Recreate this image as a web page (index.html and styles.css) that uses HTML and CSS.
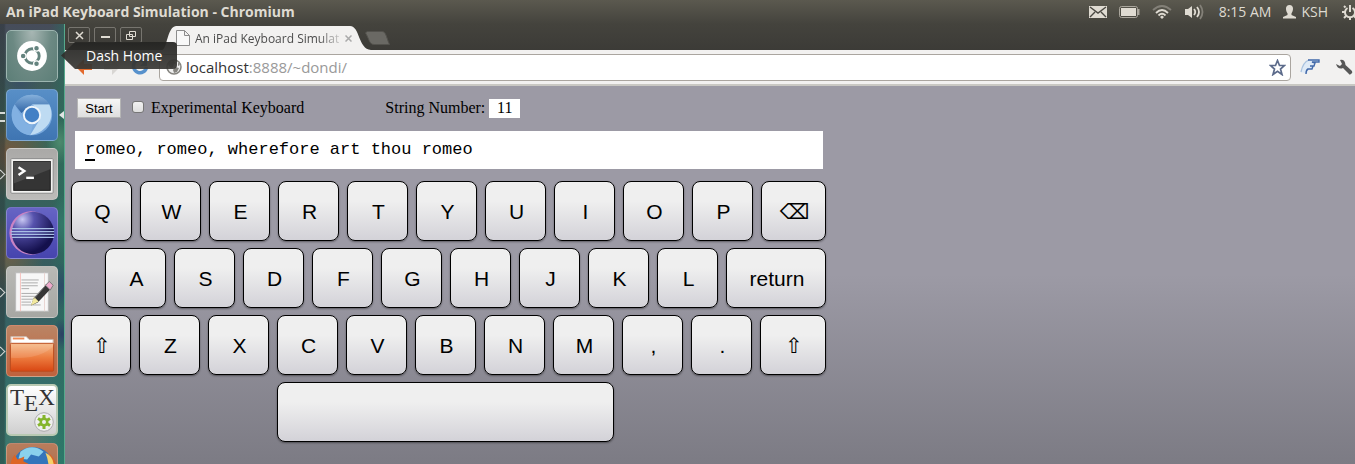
FILE: index.html
```html
<!DOCTYPE html>
<html lang="en">
<head>
<meta charset="utf-8">
<meta name="viewport" content="width=device-width, initial-scale=1">
<title>An iPad Keyboard Simulation</title>
<link rel="stylesheet" href="styles.css">
</head>
<body>
<header class="panel">
  <div class="panel-title">An iPad Keyboard Simulation - Chromium</div>
  <div class="indicators">
    <svg width="18" height="12" viewBox="0 0 18 12"><rect width="18" height="12" fill="#dfdbd2"/><path d="M1 1l8 6 8-6M1 11l5-5M17 11l-5-5" fill="none" stroke="#4a4842" stroke-width="1.4"/></svg>
    <svg width="21" height="12" viewBox="0 0 21 12"><rect x=".5" y=".5" width="18" height="11" rx="2" fill="none" stroke="#aaa69d"/><rect x="2" y="2" width="15" height="8" fill="#dfdbd2"/><path d="M19.5 3v6" stroke="#aaa69d" stroke-width="2"/></svg>
    <svg width="20" height="14" viewBox="0 0 20 14" fill="none"><path d="M1 5Q10-3 19 5" stroke="#838078" stroke-width="1.8"/><path d="M4 8Q10 2 16 8M6.500 10.500Q10 7 13.500 10.500" stroke="#dfdbd2" stroke-width="1.8"/><path d="M8 12l2-1.500 2 1.500-2 2z" fill="#dfdbd2"/></svg>
    <svg width="20" height="16" viewBox="0 0 20 16" fill="none"><path d="M1 5h3l4-3v12l-4-3H1z" fill="#dfdbd2"/><path d="M10 5q2.500 3 0 6M13 3q4 5 0 10" stroke="#dfdbd2" stroke-width="1.8"/><path d="M16 1q5 7 0 14" stroke="#838078" stroke-width="1.800"/></svg>
    <span class="clock">8:15 AM</span>
    <span class="user"><svg width="13" height="14" viewBox="0 0 13 14"><path d="M6.500 0C9 0 10.200 1.700 10 4c-.1 2-.8 3.300-1.500 4.200V10l4.500 2v1.500H0V12l4.500-2V8.200C3.800 7.300 3 6 3 4 2.800 1.700 4 0 6.500 0z" fill="#dfdbd2"/></svg>KSH</span>
    <svg width="13" height="16" viewBox="0 0 13 16" fill="none" stroke="#dfdbd2"><path d="M5.500 4a5 5 0 1 0 5 0" stroke-width="2"/><path d="M8 1v7" stroke-width="2"/><path d="M3.500 3.500l-1.500-1.500M3 8H0M4 12l-2 2M8 13v3M12 12l2 2" stroke-width="2"/></svg>
  </div>
</header>
<div class="desktop">
  <nav class="launcher" aria-label="Launcher">
    <button class="tile tile-dash" aria-label="Dash Home"><svg viewBox="0 0 52 52"><circle cx="26" cy="26" r="15.500" fill="#fff"/><circle cx="26" cy="26" r="7.500" fill="none" stroke="#64837e" stroke-width="3"/><g fill="#64837e" stroke="#fff" stroke-width="1.300"><circle cx="16.800" cy="26" r="3"/><circle cx="30.700" cy="18" r="3"/><circle cx="30.700" cy="34" r="3"/></g></svg></button>
    <button class="tile tile-chromium running active" aria-label="Chromium"><svg viewBox="0 0 52 52"><defs><linearGradient id="dome" x2="0" y2="1"><stop stop-color="#86b1dc"/><stop offset="1" stop-color="#2f64a5"/></linearGradient></defs><circle cx="26" cy="26" r="21" fill="#78a8dc"/><path d="M8 15A21 21 0 0 1 44 15H26L15 24z" fill="url(#dome)"/><path d="M8 15l9 16q3 6 10 5l-3 11A21 21 0 0 1 8 15z" fill="#82b1e2"/><path d="M26 15h18q6 14-4 24-7 7-16 8l10-16q3-10-8-16z" fill="#bedbf2"/><circle cx="26" cy="26" r="9.500" fill="#eef5fb"/><circle cx="26" cy="26" r="7.500" fill="#4380c5"/></svg></button>
    <button class="tile tile-terminal running" aria-label="Terminal"><svg viewBox="0 0 52 52"><rect x="4" y="10" width="44" height="36" rx="1" fill="#f2f2f0" stroke="#888"/><rect x="7" y="13" width="38" height="30" fill="#343434" stroke="#161616"/><path d="M7 13h38v8L7 36z" fill="#4a4a4a"/><path d="M12 19l6 4-6 4" fill="none" stroke="#fff" stroke-width="2.500"/><path d="M20 30h8" stroke="#fff" stroke-width="2.500"/></svg></button>
    <button class="tile tile-eclipse" aria-label="Eclipse"><svg viewBox="0 0 52 52"><defs><radialGradient id="orb" cx=".25" cy=".18" r=".8"><stop stop-color="#c9c8f3"/><stop offset=".35" stop-color="#5652ad"/><stop offset="1" stop-color="#14104d"/></radialGradient></defs><circle cx="25" cy="26" r="22.500" fill="#c983c4"/><circle cx="27" cy="26" r="22" fill="url(#orb)"/><path d="M5 21.500h44M4 24.500h45M4 27.500h45M5 30.500h44" stroke="#a8bfe5" stroke-width="1.200"/></svg></button>
    <button class="tile tile-editor running" aria-label="Text Editor"><svg viewBox="0 0 52 52"><rect x="9" y="6" width="34" height="40" fill="#f7f7f7" stroke="#bbb"/><path d="M14 6v40" stroke="#f6c3bd"/><path d="M39 6v40" stroke="#e8d4d1"/><path d="M15 13.500h18M15 16.500h17M15 19.500h17M15 22.500h8M15 27.500h17M15 30.500h16M15 33.500h18M15 36.500h10M15 39.500h20" stroke="#aaa"/><path d="M25 40l3-8L41 18l5 4-14 15z" fill="#363636"/><path d="M40 19l4-4 4 4-3 5z" fill="#eda9cb" stroke="#777"/><path d="M25 40l3-9 5 5z" fill="#f2e99e"/><path d="M28 33l13-15" stroke="#888"/></svg></button>
    <button class="tile tile-files running" aria-label="Files"><svg viewBox="0 0 52 52"><defs><linearGradient id="folder" x2="0" y2="1"><stop stop-color="#f5b987"/><stop offset=".5" stop-color="#ed7d40"/><stop offset="1" stop-color="#d94713"/></linearGradient></defs><path d="M4 20v-9h16l3 3h25v7z" fill="#fff" stroke="#c9b5aa"/><path d="M6 12h12v2H6z" fill="#ee8b57"/><rect x="3.500" y="18" width="45" height="29" rx="1" fill="url(#folder)" stroke="#b94a1c"/><path d="M4 33q30 2 44-12V19H4z" fill="#fff" opacity=".12"/></svg></button>
    <button class="tile tile-tex" aria-label="TeX"><span class="tex">T<span class="tex-e">E</span>X</span><svg class="tex-gear" viewBox="0 0 20 20"><circle cx="10" cy="10" r="9.300" fill="#eee" stroke="#aaa"/><path d="M10 3v14M4 6.500l12 7M4 13.500l12-7" stroke="#85b52c" stroke-width="3"/><circle cx="10" cy="10" r="4.500" fill="#85b52c"/><circle cx="10" cy="10" r="2" fill="#eee"/></svg></button>
    <button class="tile tile-firefox" aria-label="Firefox"><svg viewBox="0 0 52 52"><circle cx="27" cy="24" r="21" fill="#3375bb"/><path d="M14 8q12-9 24 0l-5 5-8-2-4 5-9-1z" fill="#8ad1ed"/><path d="M3 28Q3 17 8 11l3 5 7-3-1 5 6 3-6 4 3 9 12 4 13-8q5-12-2-21 10 8 8 20-5 18-24 18T3 28z" fill="#dd6525"/><path d="M40 9q11 5 8 20l-5 8q2-16-3-28z" fill="#f5d06a"/></svg></button>
  </nav>
  <div class="tooltip" role="tooltip">Dash Home</div>
  <section class="window">
    <div class="tabstrip">
      <div class="window-controls">
        <button aria-label="Close"><svg width="9" height="9" viewBox="0 0 9 9"><path d="M1 1l7 7M8 1L1 8" stroke-width="1.500"/></svg></button>
        <button aria-label="Minimize"><svg width="9" height="9" viewBox="0 0 9 9"><path d="M0 6h9" stroke-width="2"/></svg></button>
        <button aria-label="Restore"><svg width="11" height="9" viewBox="0 0 11 9"><path d="M3.500.5h6v5h-6zM.5 3.500h6v5h-6z"/></svg></button>
      </div>
      <div class="tab">
        <svg class="tab-shape" viewBox="0 0 209 24" preserveAspectRatio="none"><path d="M0 24C5 24 5 1 14 0H188C198 0 196 23 209 24z" fill="#f2f1f0"/></svg>
        <svg class="tab-page" width="14" height="16" viewBox="0 0 14 16"><path d="M.5.5h8l5 5v10H.5zM8.500.5v5h5" fill="#f8f8f8" stroke="#8c8c8c"/></svg>
        <span class="tab-title">An iPad Keyboard Simulation</span>
        <button class="tab-close" aria-label="Close tab"><svg width="7" height="7" viewBox="0 0 7 7"><path d="M.5.500l6 6M6.500.500l-6 6" stroke="#aaa" stroke-width="1.500"/></svg></button>
      </div>
      <button class="new-tab" aria-label="New tab"><svg width="25" height="14" viewBox="0 0 25 14"><path d="M2 .5h15c4 0 4 5 7.500 13H9C4 13.500 4 7 .5 2z" fill="#6a6964" stroke="#53524d"/></svg></button>
    </div>
    <div class="toolbar">
      <button class="nav" aria-label="Back"><svg width="18" height="18" viewBox="0 0 18 18"><path d="M1 9l8-8v5h8v6H9v5z" fill="#e36a2d"/></svg></button>
      <button class="nav" aria-label="Forward"><svg width="18" height="18" viewBox="0 0 18 18"><path d="M17 9L9 1v5H1v6h8v5z" fill="#d8d6d3"/></svg></button>
      <button class="nav" aria-label="Reload"><svg width="18" height="18" viewBox="0 0 18 18"><path d="M14 4a6.500 6.500 0 1 0 1.500 5" fill="none" stroke="#5791cc" stroke-width="3.500"/><path d="M16 1v7H9z" fill="#5791cc"/></svg></button>
      <div class="omnibox">
        <svg width="16" height="16" viewBox="0 0 16 16"><circle cx="8" cy="8" r="7" fill="#eee" stroke="#85847f" stroke-width="1.500"/><path d="M3 3l5-1 2 2-2 1-1 3-2 1-3-3zM9 8l4 1-2 4-3 1-1-3zM12 3l2 3-2 1z" fill="#85847f"/></svg>
        <a class="url" href="#page">localhost<span>:8888/~dondi/</span></a>
        <button aria-label="Bookmark"><svg width="17" height="17" viewBox="0 0 17 17"><path d="M8.500 1.500l2 5h5l-4 3.500 1.500 5.500-4.500-3.300L4 15.500 5.500 10l-4-3.500h5z" fill="#fff" stroke="#5c6b8b" stroke-width="1.700"/></svg></button>
      </div>
      <button class="extension" aria-label="Extension"><svg width="20" height="18" viewBox="0 0 20 18"><path d="M1 14Q3 3 10 2h9l-1 2h-5l2 4-2 3H9l-2 5" fill="#dfeaf6"/><path d="M1 14Q3 4 9 2" fill="none" stroke="#a9c2df" stroke-width="1.300"/><path d="M8 2h11v2h-7l3 1-1 3h-4M13 8l-1 3H8q-2 1-2 5" fill="none" stroke="#4269a9" stroke-width="1.400"/></svg></button>
      <button class="wrench" aria-label="Settings"><svg width="17" height="16" viewBox="0 0 17 16"><path d="M4 1Q9 0 9.500 6l6.500 6q1 2-1 3t-2 0L7 9Q2 11 0 5l4 2 2-2z" fill="#575757"/></svg></button>
    </div>
    <main class="page" id="page">
      <div class="controls">
        <button class="start">Start</button>
        <label class="experimental"><input type="checkbox">Experimental Keyboard</label>
        <label class="string-number">String Number: <input type="text" value="11"></label>
      </div>
      <div class="phrase"><span class="cursor">r</span>omeo, romeo, wherefore art thou romeo</div>
      <div class="keyboard">
        <div class="row"><button class="key">Q</button><button class="key">W</button><button class="key">E</button><button class="key">R</button><button class="key">T</button><button class="key">Y</button><button class="key">U</button><button class="key">I</button><button class="key">O</button><button class="key">P</button><button class="key key-delete">⌫</button></div>
        <div class="row row-home"><button class="key">A</button><button class="key">S</button><button class="key">D</button><button class="key">F</button><button class="key">G</button><button class="key">H</button><button class="key">J</button><button class="key">K</button><button class="key">L</button><button class="key key-return">return</button></div>
        <div class="row"><button class="key key-shift">⇧</button><button class="key">Z</button><button class="key">X</button><button class="key">C</button><button class="key">V</button><button class="key">B</button><button class="key">N</button><button class="key">M</button><button class="key">,</button><button class="key">.</button><button class="key key-shift-right">⇧</button></div>
        <div class="row row-space"><button class="key" aria-label="Space"></button></div>
      </div>
    </main>
  </section>
</div>
</body>
</html>
```
FILE: styles.css
```css
* { box-sizing: border-box; }
body {
  margin: 0;
  height: 100vh;
  overflow: hidden;
  display: flex;
  flex-direction: column;
  font-family: "Open Sans", "Noto Sans", sans-serif;
  background: #3c3b37;
}
button {
  padding: 0;
  border: 0;
  background: none;
  font: inherit;
  color: inherit;
}
svg { display: block; flex: none; }

/* Top panel */
.panel {
  flex: none;
  height: 24px;
  padding-left: 6px;
  display: flex;
  align-items: center;
  justify-content: space-between;
  background: linear-gradient(#5b594f, #44433d);
  color: #dfdbd2;
  font-size: 14px;
  line-height: 22px;
  white-space: nowrap;
}
.panel-title { font-weight: 700; }
.indicators { display: flex; align-items: center; gap: 12px; }
.clock { margin-left: 3px; }
.user { display: flex; align-items: center; gap: 5px; margin-right: 2px; }

/* Launcher */
.desktop {
  flex: 1;
  min-height: 0;
  display: flex;
  position: relative;
}
.launcher {
  flex: none;
  width: 65px;
  padding: 6px 7px 0 6px;
  display: flex;
  flex-direction: column;
  gap: 7px;
  overflow: hidden;
  background:
    linear-gradient(90deg, #262e3066 0 4px, transparent 6px),
    linear-gradient(90deg, transparent 64px, #56a98c 64px),
    radial-gradient(ellipse 14px 22px at 60px 118px, #4d8a6e, transparent),
    radial-gradient(ellipse 10px 30px at 62px 200px, #34786a, transparent),
    radial-gradient(ellipse 12px 24px at 62px 262px, #2c4c68, transparent),
    radial-gradient(ellipse 10px 16px at 62px 310px, #2b4064, transparent),
    radial-gradient(ellipse 20px 16px at 20px 58px, #394f63, transparent),
    radial-gradient(ellipse 40px 46px at 10px 130px, #75583f, transparent),
    radial-gradient(ellipse 34px 46px at 10px 230px, #6b6049, transparent),
    radial-gradient(ellipse 30px 20px at 30px 415px, #57756a, transparent),
    linear-gradient(90deg, transparent 50px, #24745f80),
    linear-gradient(#464c5a, #386658 25%, #365b60 60%, #337c70);
}
.tile {
  flex: none;
  position: relative;
  width: 52px;
  height: 52px;
  border-radius: 5px;
  border: 1px solid #ffffff40;
}
.tile > svg { width: 50px; height: 50px; }
.tile-dash { background: radial-gradient(at 50% 0, #a8b7b4, #6c8983 55%, #5c7e77); border-color: #9db5b0; }
.tile-chromium { background: linear-gradient(#588fc7, #3f75b2); }
.tile-terminal { background: linear-gradient(#aaa9a7, #bcbbb9); }
.tile-eclipse { background: linear-gradient(#6664c4, #4644ae); }
.tile-editor { background: linear-gradient(#b9b9b5, #a6a7a3); }
.tile-files { background: linear-gradient(#ba8464, #c0623d); }
.tile-tex { background: linear-gradient(#fff, #cfcfcf); border: 2px solid #b8c9b2; }
.tile-firefox { background: linear-gradient(#b97d5c, #a86140); }
.running::before {
  content: "";
  position: absolute;
  left: -10px;
  top: 22px;
  width: 6px;
  height: 6px;
  border: solid #d5d9d6;
  border-width: 1px 1px 0 0;
  transform: rotate(45deg);
}
.active::before {
  left: -7px;
  top: 22px;
  width: 5px;
  height: 6px;
  border-width: 2px 0;
  transform: none;
}
.active::after {
  content: "";
  position: absolute;
  right: -7px;
  top: 21px;
  border: solid transparent;
  border-width: 4px 5px 4px 0;
  border-right-color: #dfe5e3;
}
.tex {
  position: absolute;
  left: 2px;
  top: 0;
  font: 23px/24px "Liberation Serif", serif;
  color: #333;
  display: flex;
}
.tex-e { margin-top: 6px; }
.tile > .tex-gear {
  position: absolute;
  right: 2px;
  bottom: 2px;
  width: 20px;
  height: 20px;
}

.tooltip {
  position: absolute;
  z-index: 2;
  left: 61px;
  top: 18px;
  padding: 0 15px 0 25px;
  height: 27px;
  line-height: 27px;
  font-size: 14px;
  color: #fff;
  background: linear-gradient(#242422ed, #3a3936ed);
  clip-path: polygon(0 50%, 14px 0, 100% 0, 100% 100%, 14px 100%);
  border-radius: 4px;
}

/* Browser window */
.window {
  flex: 1;
  min-width: 0;
  display: flex;
  flex-direction: column;
}
.tabstrip {
  flex: none;
  height: 26px;
  padding-left: 3px;
  display: flex;
  align-items: flex-end;
  background: linear-gradient(#44433d, #3c3b37);
}
.window-controls {
  align-self: flex-start;
  display: flex;
  gap: 4px;
  padding-top: 3px;
}
.window-controls button {
  width: 22px;
  height: 16px;
  display: flex;
  align-items: center;
  justify-content: center;
  border: 1px solid #77756f;
  border-radius: 2px;
}
.window-controls path { fill: none; stroke: #dfdbd2; }
.tab {
  position: relative;
  width: 209px;
  height: 24px;
  margin-left: 20px;
  padding: 0 14px 0 14px;
  display: flex;
  align-items: center;
  font-size: 12px;
  color: #4c4c4c;
}
.tab-shape {
  position: absolute;
  inset: 0;
  width: 100%;
  height: 100%;
}
.tab-page { position: relative; }
.tab-title {
  position: relative;
  flex: 1;
  margin-left: 5px;
  overflow: hidden;
  white-space: nowrap;
  -webkit-mask-image: linear-gradient(90deg, #000 85%, #0003);
  mask-image: linear-gradient(90deg, #000 85%, #0003);
}
.tab-close { position: relative; margin: 0 5px; }
.new-tab { margin: 0 0 5px -6px; }
.toolbar {
  flex: none;
  height: 36px;
  padding: 0 2px 0 10px;
  display: flex;
  align-items: center;
  background: #f2f1f0;
  border-bottom: 2px solid #c9c8c3;
}
.nav { margin-right: 10px; }
.omnibox {
  flex: 1;
  min-width: 0;
  height: 27px;
  padding: 0 4px 0 6px;
  display: flex;
  align-items: center;
  gap: 4px;
  background: #fff;
  border: 1px solid #aaa59f;
  border-radius: 4px;
}
.url {
  flex: 1;
  font-size: 15px;
  line-height: 24px;
  color: #333;
  text-decoration: none;
}
.url span { color: #999; }
.extension { margin: 0 16px 0 9px; }

/* Page */
.page {
  flex: 1;
  padding: 12px 6px;
  color: #000;
  font: 16px/20px "Liberation Serif", serif;
  background: linear-gradient(#9c9aa5 50%, #7c7b84);
}
.controls {
  display: flex;
  align-items: center;
  height: 20px;
  padding-left: 6px;
}
.start {
  width: 44px;
  height: 20px;
  border: 1px solid #b5b5b5;
  background: linear-gradient(#f6f6f6, #dedede);
  font: 13px "Liberation Sans", sans-serif;
}
.experimental { display: flex; align-items: center; margin-left: 11px; }
.experimental input {
  appearance: none;
  width: 12px;
  height: 12px;
  margin: 0 7px 2px 0;
  border: 1px solid #777;
  border-radius: 3px;
  background: linear-gradient(#f2f2f2, #dedede);
}
.string-number { margin-left: 81px; }
.string-number input {
  width: 31px;
  height: 19px;
  padding: 0;
  border: 0;
  background: #fff;
  font: inherit;
  text-align: center;
}
.phrase {
  max-width: 748px;
  height: 38px;
  margin: 13px 0 0 4px;
  padding: 9px 10px;
  background: #fff;
  font: 17px/20px "Liberation Mono", monospace;
}
.cursor { display: inline-block; height: 21px; border-bottom: 2px solid #000; }
.keyboard {
  max-width: 755px;
  margin-top: 12px;
  display: flex;
  flex-direction: column;
  gap: 7px;
}
.row { display: flex; gap: 8px; }
.key {
  flex: 1 1 61px;
  min-width: 0;
  height: 60px;
  padding: 2px 0 0 2px;
  border: 1px solid #000;
  border-radius: 8px;
  background: linear-gradient(#efefef 33%, #d3d2d8);
  box-shadow: 0 1px 2px #0006;
  font: 21px "Liberation Sans", "DejaVu Sans", sans-serif;
}
.key-delete { flex-basis: 65px; }
.row-home { padding-left: 34px; }
.key-return { flex-basis: 100px; }
.key-shift { flex-basis: 60px; }
.key-shift-right { flex-basis: 66px; }
.row-space { padding: 0 212px 0 206px; }
```
